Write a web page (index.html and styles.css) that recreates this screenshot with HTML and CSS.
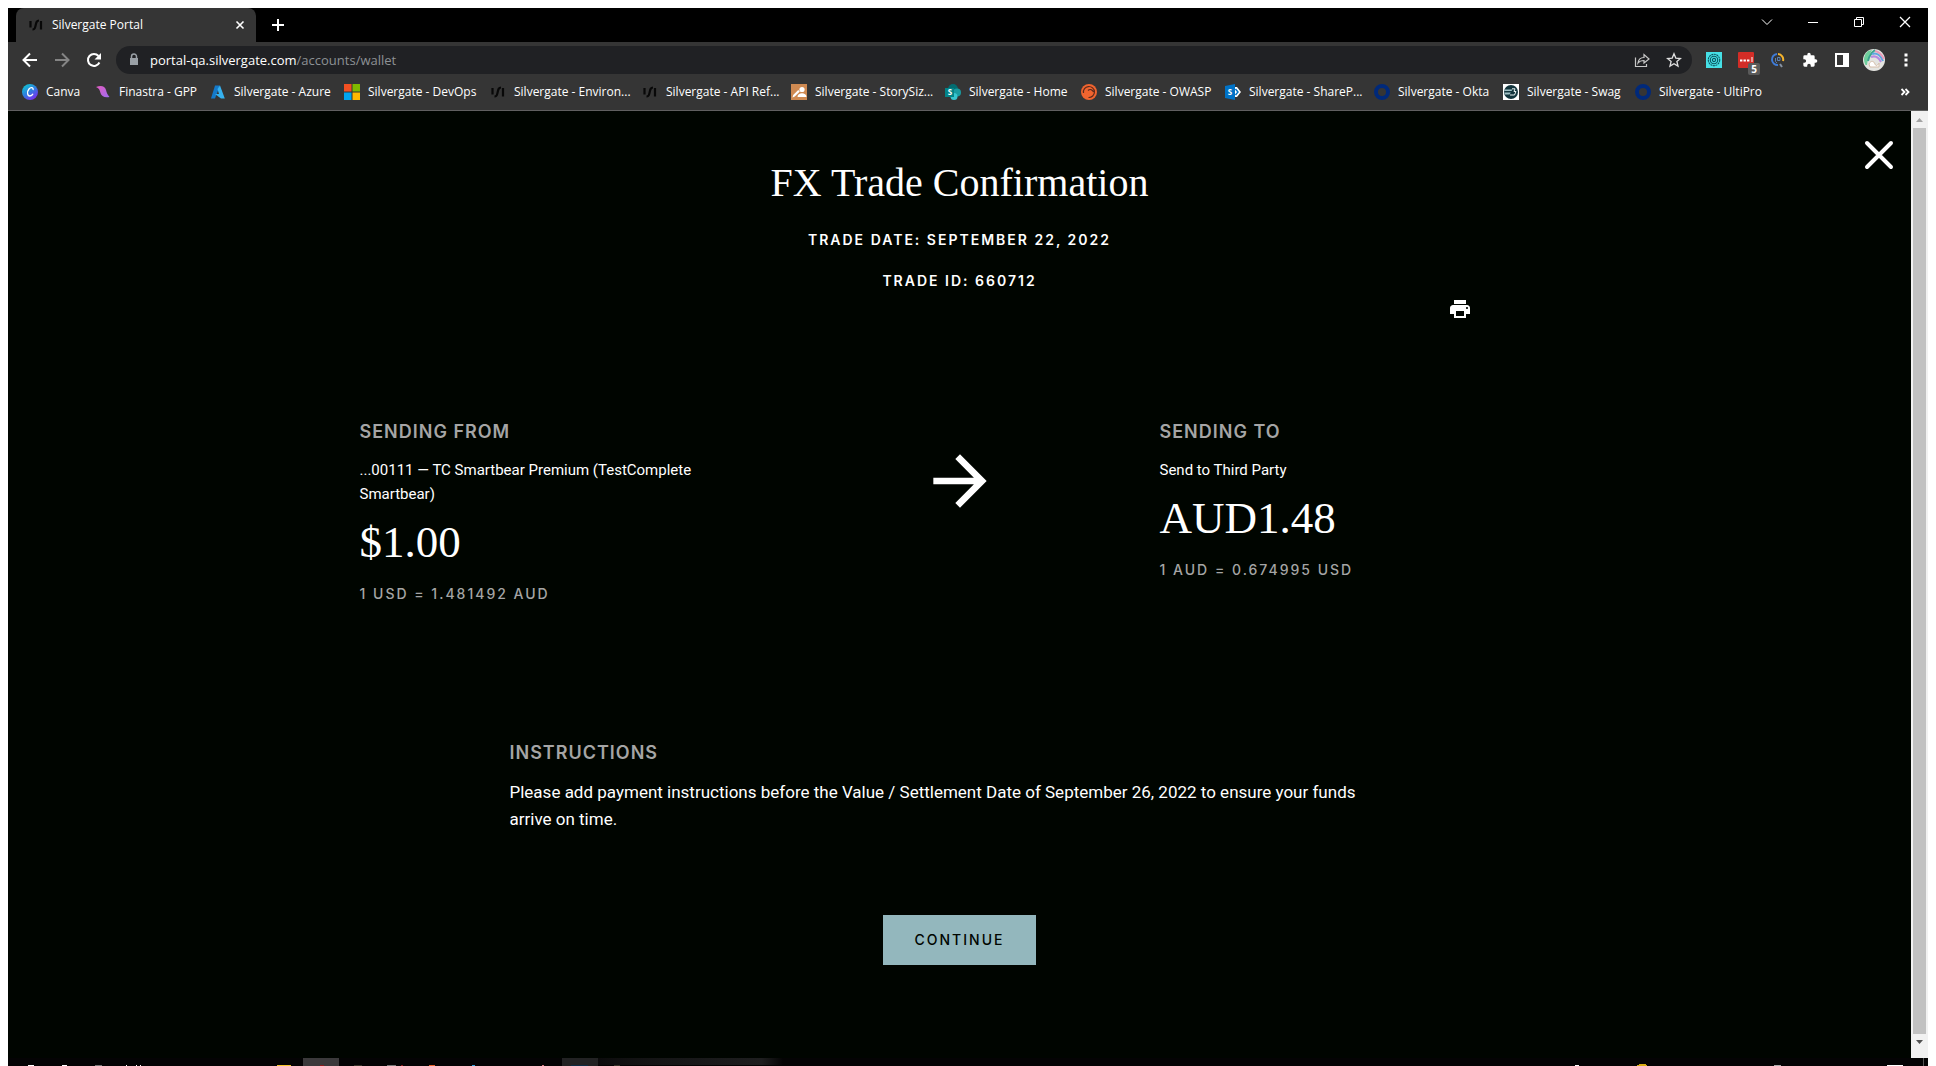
FILE: index.html
```html
<!DOCTYPE html>
<html lang="en">
<head>
<meta charset="utf-8">
<title>Silvergate Portal</title>
<link rel="stylesheet" href="styles.css">
</head>
<body>
<svg class="defs" aria-hidden="true">
  <symbol id="mark" viewBox="0 0 16 16"><path d="M2.500 4v6.500M13 4v8.500M4.500 12.500c2.500 0 2.500-1.500 3.200-4.500s1-4.500 3.300-4.500" fill="none" stroke="#080808" stroke-width="2.200"/></symbol>
  <symbol id="ring" viewBox="0 0 16 16"><circle cx="8" cy="8" r="6" fill="none" stroke="#00297a" stroke-width="4"/></symbol>
</svg>
<div class="window">
  <header class="chrome">
    <div class="tabstrip">
      <div class="tab">
        <svg class="i16" aria-hidden="true"><use href="#mark"/></svg>
        <span class="tab-title">Silvergate Portal</span>
        <button class="icon-btn small" aria-label="Close tab"><svg class="i16" viewBox="0 0 16 16"><path d="M4.500 4.500l7 7m0-7l-7 7" stroke="#fff" stroke-width="1.600"/></svg></button>
      </div>
      <button class="icon-btn newtab" aria-label="New tab"><svg class="i16" viewBox="0 0 16 16"><path d="M2 8h12M8 2v12" stroke="#fff" stroke-width="2"/></svg></button>
      <div class="wincontrols">
        <button class="icon-btn" aria-label="Search tabs"><svg class="i16" viewBox="0 0 16 16"><path d="M3 5.500l5 5 5-5" fill="none" stroke="#fff"/></svg></button>
        <button class="icon-btn" aria-label="Minimize"><svg class="i16" viewBox="0 0 16 16"><path d="M3 8.500h10" stroke="#fff"/></svg></button>
        <button class="icon-btn" aria-label="Restore"><svg class="i16" viewBox="0 0 16 16"><path d="M3.500 5.500h7v7h-7zM5.500 5V3.500h7v7H11" fill="none" stroke="#fff"/></svg></button>
        <button class="icon-btn" aria-label="Close"><svg class="i16" viewBox="0 0 16 16"><path d="M3 3l10 10M13 3L3 13" stroke="#fff" stroke-width="1.300"/></svg></button>
      </div>
    </div>
    <nav class="toolbar" aria-label="Browser">
      <div class="cells">
        <button class="icon-btn cell" aria-label="Back"><svg class="i16" viewBox="0 0 16 16"><path d="M15 8H2M8 1.500L1.500 8 8 14.500" fill="none" stroke="#fff" stroke-width="2"/></svg></button>
        <button class="icon-btn cell" aria-label="Forward"><svg class="i16" viewBox="0 0 16 16"><path d="M1 8h13M8 1.500L14.500 8 8 14.500" fill="none" stroke="#858585" stroke-width="2"/></svg></button>
        <button class="icon-btn cell" aria-label="Reload"><svg class="i16" viewBox="0 0 16 16"><path d="M13.400 10.500A6 6 0 1 1 12.500 4" fill="none" stroke="#fff" stroke-width="2"/><path d="M15 1v6.500H8.500z" fill="#fff"/></svg></button>
      </div>
      <div class="omnibox">
        <svg class="i16" viewBox="0 0 16 16"><path d="M4 6h8v7H4z" fill="#9aa0a6"/><path d="M5.500 7V4.500a2.500 2.500 0 0 1 5 0V7" fill="none" stroke="#9aa0a6" stroke-width="1.500"/></svg>
        <div class="url">portal-qa.silvergate.com<span class="path">/accounts/wallet</span></div>
        <button class="icon-btn cell" aria-label="Share"><svg class="i16" viewBox="0 0 16 16"><path d="M1.500 5.500v9h11V12M4 11c.5-4 3-5.500 6-5.500V2.500L15 7l-5 4V8.500c-3 0-4.500.5-6 2.500z" fill="none" stroke="#c8c8c8" stroke-width="1.200"/></svg></button>
        <button class="icon-btn cell" aria-label="Bookmark this page"><svg class="i16" viewBox="0 0 16 16"><path d="M8 1.800l1.800 4.300 4.700.4-3.600 3 1.100 4.600L8 11.700l-4 2.400 1.100-4.600-3.600-3 4.700-.4z" fill="none" stroke="#e0e0e0" stroke-width="1.300"/></svg></button>
      </div>
      <div class="cells ext">
        <button class="icon-btn cell" aria-label="Authenticator"><svg class="i16" viewBox="0 0 16 16"><path d="M0 0h16v16H0z" fill="#46e0e6"/><g fill="none" stroke="#0c5560" stroke-width="1.100"><circle cx="8" cy="8" r="5.700" stroke-dasharray="2 .6"/><circle cx="8" cy="8" r="3.700"/><circle cx="8" cy="8" r="1.600"/></g></svg></button>
        <button class="icon-btn cell badge-host" aria-label="Password manager"><svg class="i16" viewBox="0 0 16 16"><rect width="16" height="16" rx="1" fill="#d32d27"/><path d="M2 8.500h2.400M5.500 8.500h2.400M9 8.500h2.400" stroke="#fff" stroke-width="2.200"/><path d="M14 5v5" stroke="#fff"/></svg><span class="badge">5</span></button>
        <button class="icon-btn cell" aria-label="Search extension"><svg class="i16" viewBox="0 0 16 16"><g fill="none" stroke-width="2"><path d="M8 13A5.500 5.500 0 0 1 7 2" stroke="#3f7bd6"/><path d="M8 2a5.500 5.500 0 0 1 5 7" stroke="#f4b32c"/><path d="M10 12l2 3" stroke="#8793a3"/></g><path d="M5.500 6v3.500l1.500 1.500M7.500 5.500h2.500v3H7.500z" fill="none" stroke="#5c80b0" stroke-width="1"/></svg></button>
        <button class="icon-btn cell" aria-label="Extensions"><svg class="i16" viewBox="0 0 24 24"><path fill="#fff" d="M20.500 11H19V7a2 2 0 0 0-2-2h-4V3.500a2.500 2.500 0 0 0-5 0V5H4a2 2 0 0 0-2 2v3.800h1.500a2.700 2.700 0 0 1 0 5.400H2V20a2 2 0 0 0 2 2h3.800v-1.500a2.700 2.700 0 0 1 5.400 0V22H17a2 2 0 0 0 2-2v-4h1.500a2.500 2.500 0 0 0 0-5z"/></svg></button>
        <button class="icon-btn cell" aria-label="Side panel"><svg class="i16" viewBox="0 0 16 16"><path d="M1 1h14v14H1zM3 3v10h6V3z" fill="#fff" fill-rule="evenodd"/></svg></button>
        <button class="icon-btn cell" aria-label="Profile"><svg class="i22" viewBox="0 0 22 22"><circle cx="11" cy="11" r="11" fill="#e4e4e0"/><path d="M2.500 16A11 11 0 0 1 5 2l4-1c-2 4-4 8-5 15z" fill="#6fcf9c"/><g fill="none" stroke-width="2"><path d="M5 12C6 7 8 4 12 1" stroke="#3aa58e"/><path d="M9 5c5-2 9 2 11 7" stroke="#5da7e0"/><path d="M8 8c5-2 8 1 10 5" stroke="#b78be0"/><path d="M12 2c5 1 7 4 9 8" stroke="#e99ab8"/></g><path d="M6 15c2-4 5-3 6 0s3 1 4-1v4H7z" fill="#fff" stroke="#d4bda8"/></svg></button>
        <button class="icon-btn cell" aria-label="Menu"><svg class="i16" viewBox="0 0 16 16"><path d="M6.500 1.500h3v3h-3zM6.500 6.500h3v3h-3zM6.500 11.500h3v3h-3z" fill="#fff"/></svg></button>
      </div>
    </nav>
    <nav class="bookmarks" aria-label="Bookmarks">
      <a href="#"><svg class="i16" viewBox="0 0 16 16"><defs><linearGradient id="cv" x1="0" y1="0" x2=".7" y2="1"><stop offset=".1" stop-color="#10c4d0"/><stop offset=".55" stop-color="#2f7de0"/><stop offset="1" stop-color="#7a2cf0"/></linearGradient></defs><circle cx="8" cy="8" r="8" fill="url(#cv)"/><path d="M11 6c.8-2.500-2.200-3.300-4-1-2.400 3-1.600 7 .8 7 1.500 0 2.600-.9 3.200-2.200" fill="none" stroke="#fff" stroke-width="1.300"/></svg>Canva</a>
      <a href="#"><svg class="i16" viewBox="0 0 16 16"><defs><linearGradient id="fn" x1="0" y1="0" x2="1" y2="1"><stop stop-color="#e35cc0"/><stop offset="1" stop-color="#a06cf0"/></linearGradient></defs><path d="M1 3c5-2 9-1 10 3 .7 3 1.500 4.500 3.500 7C9 14 6.500 12 5.500 9 4.800 6 4 4 1 3z" fill="url(#fn)"/></svg>Finastra - GPP</a>
      <a href="#"><svg class="i16" viewBox="0 0 16 16"><path d="M5 1.500h5L5 14.500H1z" fill="#1479c9"/><path d="M10 1.500l4.800 13H11L5 10h4L7.500 5z" fill="#36b1ef"/></svg>Silvergate - Azure</a>
      <a href="#"><svg class="i16" viewBox="0 0 16 16"><path d="M0 0h7.500v7.500H0z" fill="#f25022"/><path d="M8.500 0H16v7.500H8.500z" fill="#7fba00"/><path d="M0 8.500h7.500V16H0z" fill="#00a4ef"/><path d="M8.500 8.500H16V16H8.500z" fill="#ffb900"/></svg>Silvergate - DevOps</a>
      <a href="#"><svg class="i16"><use href="#mark"/></svg>Silvergate - Environ...</a>
      <a href="#"><svg class="i16"><use href="#mark"/></svg>Silvergate - API Ref...</a>
      <a href="#"><svg class="i16" viewBox="0 0 16 16"><path d="M0 0h16v16H0z" fill="#cf8a52"/><circle cx="11" cy="5.500" r="2.600" fill="#fff"/><path d="M6.500 13c0-5 9-5 9 0zM1.500 13.500l.7-2.500 5-5 1.600 1.600-5 5z" fill="#fff"/></svg>Silvergate - StorySiz...</a>
      <a href="#"><svg class="i16" viewBox="0 0 16 16"><circle cx="8" cy="5" r="5" fill="#036c70"/><circle cx="12" cy="8.500" r="4" fill="#1a9ba1"/><circle cx="9" cy="12.500" r="3.500" fill="#37c6d0"/><path d="M0 4h9v9H0z" fill="#038387"/><text x="5" y="11" class="glyph">S</text></svg>Silvergate - Home</a>
      <a href="#"><svg class="i16" viewBox="0 0 16 16"><circle cx="8" cy="8" r="8" fill="#f0642f"/><path d="M2.500 9a5.500 5.500 0 1 1 5 4.500M12.500 8c-1-3-4-3-5.500-1.500" fill="none" stroke="#5a2a1c" stroke-width="1.200"/></svg>Silvergate - OWASP</a>
      <a href="#"><svg class="i16" viewBox="0 0 16 16"><path d="M10 3h2l4 5-4 5h-2z" fill="#fff"/><path d="M0 2l10-2v16L0 14z" fill="#0072c6"/><path d="M10.500 5l2.500 3-2.500 3" fill="none" stroke="#0072c6" stroke-width="1.500"/><text x="5" y="11" class="glyph">S</text></svg>Silvergate - ShareP...</a>
      <a href="#"><svg class="i16"><use href="#ring"/></svg>Silvergate - Okta</a>
      <a href="#"><svg class="i16" viewBox="0 0 16 16"><path d="M0 0h16v16H0z" fill="#fff"/><circle cx="8" cy="8" r="7" fill="#12343c"/><path d="M1.500 5.500h8L8.500 7H1.300zM1.300 8.500h6.500L6.500 10.500H2z" fill="#9fc0c4"/><path d="M9 4.800h3l-1 2.700h2l-1.500 3.500H7" fill="none" stroke="#e6f0f0"/></svg>Silvergate - Swag</a>
      <a href="#"><svg class="i16"><use href="#ring"/></svg>Silvergate - UltiPro</a>
      <button class="icon-btn more" aria-label="More bookmarks"><svg class="i16" viewBox="0 0 16 16"><path d="M2.500 5l3 3-3 3M6.500 5l3 3-3 3" fill="none" stroke="#fff" stroke-width="1.800"/></svg></button>
    </nav>
  </header>

  <div class="viewport">
    <main class="page">
      <button class="icon-btn dismiss" aria-label="Close confirmation"><svg class="i32" viewBox="0 0 32 32"><path d="M4 4l24 24M28 4L4 28" stroke="#fff" stroke-width="4" stroke-linecap="round"/></svg></button>
      <h1>FX Trade Confirmation</h1>
      <p class="meta">Trade Date: September 22, 2022</p>
      <p class="meta">Trade ID: 660712</p>
      <div class="print-row"><button class="icon-btn" aria-label="Print"><svg class="i24" viewBox="0 0 24 24"><path fill="#fff" d="M19 8H5c-1.660 0-3 1.340-3 3v6h4v4h12v-4h4v-6c0-1.660-1.340-3-3-3zm-3 11H8v-5h8v5zm3-7c-.55 0-1-.45-1-1s.45-1 1-1 1 .45 1 1-.45 1-1 1zm-1-9H6v4h12V3z"/></svg></button></div>
      <section class="trade">
        <div>
          <h2>Sending From</h2>
          <p class="account">...00111 — TC Smartbear Premium (TestComplete Smartbear)</p>
          <p class="amount">$1.00</p>
          <p class="rate">1 USD = 1.481492 AUD</p>
        </div>
        <svg class="arrow" viewBox="0 0 24 24" aria-hidden="true"><path fill="#fff" d="M12 4l-1.410 1.410L16.170 11H4v2h12.170l-5.580 5.590L12 20l8-8z"/></svg>
        <div>
          <h2>Sending To</h2>
          <p class="account">Send to Third Party</p>
          <p class="amount">AUD1.48</p>
          <p class="rate">1 AUD = 0.674995 USD</p>
        </div>
      </section>
      <section class="instructions">
        <h2>Instructions</h2>
        <p>Please add payment instructions before the Value / Settlement Date of September 26, 2022 to ensure your funds arrive on time.</p>
      </section>
      <button class="continue">Continue</button>
    </main>
    <div class="scrollbar" aria-hidden="true">
      <svg class="sb-arrow" viewBox="0 0 17 17"><path d="M5 11h7L8.500 7z" fill="#a3a3a3"/></svg>
      <div class="thumb"></div>
      <svg class="sb-arrow" viewBox="0 0 17 17"><path d="M5 6h7l-3.500 4z" fill="#505050"/></svg>
    </div>
  </div>

  <footer class="taskbar" aria-hidden="true">
    <svg width="900" height="8" viewBox="0 0 900 8">
      <defs><linearGradient id="glow"><stop stop-color="#222" stop-opacity="0"/><stop offset=".5" stop-color="#161617"/><stop offset=".9" stop-color="#1e1e1f"/><stop offset="1" stop-color="#222" stop-opacity="0"/></linearGradient></defs>
      <path d="M560 0h215v7H560z" fill="url(#glow)"/>
      <path d="M295 0h36v8h-36z" fill="#3b393b"/><path d="M554 0h36v8h-36z" fill="#222223"/>
      <path d="M20 7h6v1h-6zM54 7h5v1h-5zM118 7h1v1h-1zM128 7h1v1h-1zM132 7h1v1h-1z" fill="#fff"/>
      <path d="M87 7h7v1h-7zM379 7h9v1h-9z" fill="#777"/>
      <path d="M269 7h14v1h-14z" fill="#f7c52b"/><path d="M346 7h8v1h-8zM606 7h6v1h-6z" fill="#383429"/>
      <path d="M312 7h4v1h-4zM393 7h2v1h-2z" fill="#8a1c1c"/><path d="M421 7h6v1h-6z" fill="#e8632c"/>
      <path d="M464 7h3v1h-3z" fill="#2fa0dc"/><path d="M534 7h2v1h-2z" fill="#d67a80"/><path d="M563 7h17v1h-17z" fill="#0d2c44"/>
    </svg>
    <svg width="360" height="8" viewBox="0 0 360 8">
      <path d="M7 7h4v1H7zM319 7h16v1h-16z" fill="#fff"/><path d="M71 6h7v1h-7zM69 7h10v1H69z" fill="#d9ad13"/><path d="M206 7h7v1h-7z" fill="#aaa"/><path d="M355 0h1v8h-1z" fill="#555"/>
    </svg>
  </footer>
</div>
</body>
</html>
```
FILE: styles.css
```css
* { box-sizing: border-box; }
body { margin: 0; background: #fff; color: #fff; font-family: Roboto, "Liberation Sans", sans-serif; }
h1, h2, p { margin: 0; font-weight: 400; }
.defs { position: absolute; width: 0; height: 0; }
svg { display: block; flex: none; }
.i16 { width: 16px; height: 16px; }
.i22 { width: 22px; height: 22px; }
.i24 { width: 24px; height: 24px; }
.i32 { width: 32px; height: 32px; }
.icon-btn { display: flex; align-items: center; justify-content: center; padding: 0; border: 0; background: none; cursor: pointer; }

.window { display: flex; flex-direction: column; height: 100vh; padding: 8px 8px 0; overflow: hidden; }

/* Browser chrome */
.chrome { background: #353535; border-bottom: 1px solid #606060; font: 12px/16px "Open Sans", "Noto Sans", sans-serif; }
.tabstrip { display: flex; height: 34px; padding-left: 8px; background: #000; }
.tab { display: flex; align-items: center; gap: 8px; width: 240px; padding: 0 8px 0 12px; border-radius: 8px 8px 0 0; background: #353535; }
.tab-title { flex: 1; }
.newtab { width: 28px; margin-left: 8px; }
.wincontrols { display: flex; align-items: center; height: 28px; margin-left: auto; }
.wincontrols .icon-btn { width: 46px; }
.toolbar { display: flex; align-items: center; gap: 6px; height: 36px; padding: 0 6px; }
.cells { display: flex; }
.cell { width: 32px; height: 28px; }
.omnibox { display: flex; align-items: center; flex: 1; height: 28px; padding: 0 2px 0 10px; border-radius: 14px; background: #202124; }
.url { flex: 1; padding-left: 8px; font-size: 13px; line-height: 20px; }
.path { color: #8d9195; }
.badge-host { position: relative; }
.badge { position: absolute; right: 2px; bottom: -1px; width: 12px; border-radius: 2px; background: #5a5a5a; color: #fff; font: bold 10px/12px "Open Sans", sans-serif; }
.bookmarks { display: grid; grid-template-columns: 73px 115px 134px 146px 152px 149px 154px 136px 144px 149px 129px 132px 1fr 32px; align-items: center; height: 32px; padding: 0 5px 4px 14px; }
.bookmarks a { display: flex; align-items: center; gap: 8px; color: #fff; text-decoration: none; white-space: nowrap; }
.glyph { fill: #fff; font: bold 8px "Open Sans", sans-serif; text-anchor: middle; }

/* Page */
.viewport { display: flex; flex: 1; min-height: 0; }
.page { position: relative; flex: 1; display: flex; flex-direction: column; align-items: center; padding: 48px 24px 0; background: #000500; overflow: hidden; }
.dismiss { position: absolute; top: 28px; right: 16px; }
h1 { margin-bottom: 23px; font: 40px/48px "Liberation Serif", "Times New Roman", serif; }
.meta, .rate, .continue { font-family: Inter, "Liberation Sans", sans-serif; font-size: 14px; font-weight: 600; line-height: 20px; letter-spacing: 2px; text-transform: uppercase; }
.meta { margin-bottom: 21px; }
.print-row { display: flex; justify-content: flex-end; width: 100%; max-width: 1024px; margin-top: -15px; }
.trade { display: grid; grid-template-columns: repeat(3, 1fr); width: 100%; max-width: 1200px; margin-top: 99px; }
h2 { margin-bottom: 14px; color: #a5a5a5; font-family: Inter, "Liberation Sans", sans-serif; font-size: 18px; font-weight: 600; line-height: 24px; letter-spacing: 1px; text-transform: uppercase; }
.account { max-width: 340px; font-size: 15px; line-height: 24px; }
.amount { margin: 8px 0 14px; font: 45px/56px "Liberation Serif", "Times New Roman", serif; }
.rate { color: #a5a5a5; font-weight: 500; }
.arrow { width: 80px; height: 80px; margin-top: 21px; justify-self: center; }
.instructions { width: 100%; max-width: 900px; margin-top: 137px; padding-right: 32px; font-size: 17px; line-height: 27px; }
.continue { margin-top: 82px; padding: 0 32px; border: 0; background: #93b7bd; color: #000500; font-weight: 500; line-height: 50px; cursor: pointer; }

.scrollbar { display: flex; flex-direction: column; width: 17px; padding-bottom: 7px; background: #f1f1f1; }
.sb-arrow { width: 17px; height: 17px; }
.thumb { flex: 1; margin: 0 2px; background: #c1c1c1; }
.taskbar { display: flex; justify-content: space-between; height: 8px; background: #040304; }
```
